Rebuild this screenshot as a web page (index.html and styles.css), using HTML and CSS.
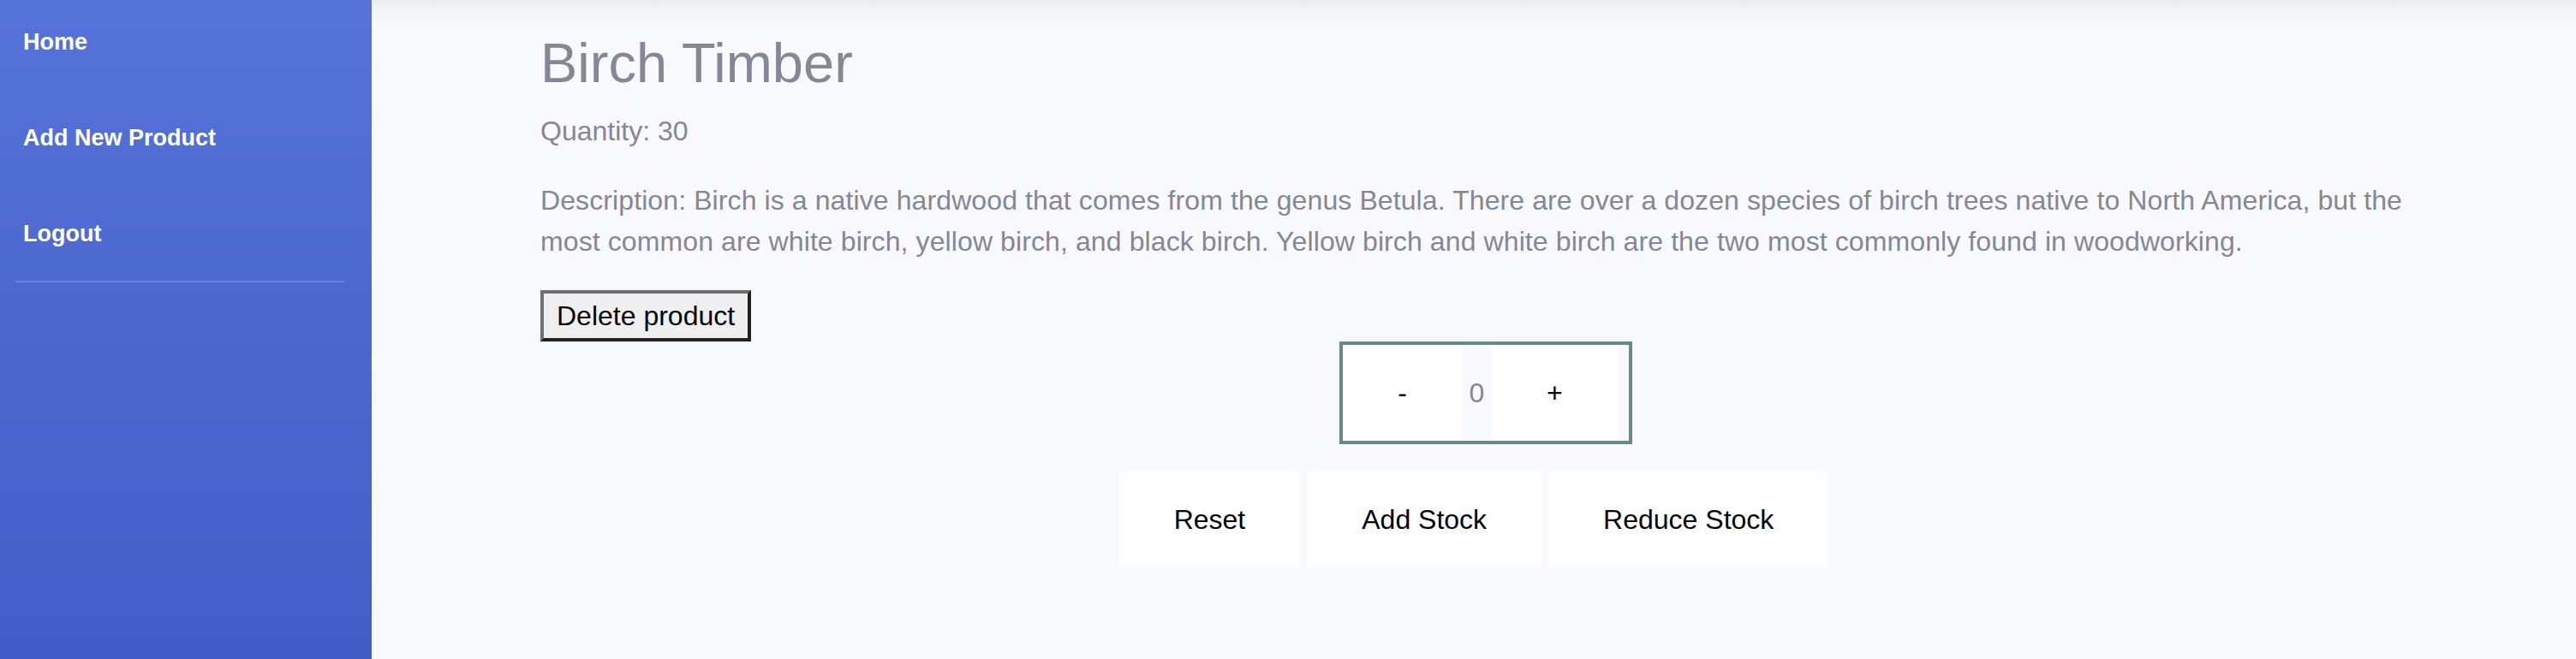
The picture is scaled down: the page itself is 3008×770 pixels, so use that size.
FILE: index.html
```html
<!DOCTYPE html>
<html lang="en">
<head>
<meta charset="utf-8">
<title>Birch Timber</title>
<link rel="stylesheet" href="styles.css">
</head>
<body>
<div class="wrapper">
  <nav class="sidebar">
    <ul class="nav">
      <li class="nav-item"><a class="nav-link" href="#">Home</a></li>
      <li class="nav-item"><a class="nav-link" href="#">Add New Product</a></li>
      <li class="nav-item"><a class="nav-link" href="#">Logout</a></li>
    </ul>
    <hr class="sidebar-divider">
  </nav>
  <main class="content">
    <div class="container">
      <h1 class="title">Birch Timber</h1>
      <p class="qty">Quantity: 30</p>
      <p class="desc">Description: Birch is a native hardwood that comes from the genus Betula. There are over a dozen species of birch trees native to North America, but the most common are white birch, yellow birch, and black birch. Yellow birch and white birch are the two most commonly found in woodworking.</p>
      <button class="delete-btn" type="button">Delete product</button>
      <div class="counter-row">
        <div class="counter">
          <button class="counter-btn" type="button">-</button>
          <input class="counter-input" type="text" value="0">
          <button class="counter-btn" type="button">+</button>
        </div>
      </div>
      <div class="actions">
        <button class="action-btn" type="button">Reset</button>
        <button class="action-btn" type="button">Add Stock</button>
        <button class="action-btn" type="button">Reduce Stock</button>
      </div>
    </div>
  </main>
</div>
</body>
</html>
```
FILE: styles.css
```css
* { box-sizing: border-box; }

html, body {
  margin: 0;
  padding: 0;
  height: 770px;
  overflow: hidden;
}

body {
  font-family: "Liberation Sans", Arial, sans-serif;
  color: #858796;
  background: #f8f9fc;
}

.wrapper {
  display: flex;
  height: 770px;
}

.sidebar {
  width: 434px;
  flex: 0 0 434px;
  background: linear-gradient(180deg, #5673d9 0px, #425dc5 770px);
}

.nav {
  list-style: none;
  margin: 0;
  padding: 0;
}

.nav-link {
  display: block;
  padding: 25px 0 39px 27px;
  font-size: 27px;
  line-height: 48px;
  font-weight: 700;
  color: #ffffff;
  text-decoration: none;
}

.nav-item:last-child .nav-link {
  padding-bottom: 31px;
}

.sidebar-divider {
  margin: 0 32px 0 18px;
  border: 0;
  border-top: 2px solid rgba(255, 255, 255, 0.18);
  height: 0;
}

.content {
  flex: 1;
  background: linear-gradient(180deg, #eaebef 0px, #f4f5f8 14px, #f8f9fc 30px);
}

.container {
  padding: 35px 197px 0 197px;
}

.title {
  margin: 0 0 16px 0;
  font-size: 65px;
  line-height: 1.2;
  font-weight: 400;
  color: #858796;
}

.qty {
  margin: 0 0 33px 0;
  font-size: 32px;
  line-height: 48px;
}

.desc {
  margin: 0 0 33px 0;
  font-size: 32px;
  line-height: 48px;
  letter-spacing: 0.1px;
}

.delete-btn {
  display: block;
  font-family: inherit;
  font-size: 32px;
  line-height: 48px;
  color: #000000;
  background: #efefef;
  padding: 2px 15px;
  border-width: 4px;
  border-style: solid;
  border-color: #707070 #202020 #202020 #707070;
  margin: 0;
}

.counter-row {
  display: flex;
  justify-content: center;
}

.counter {
  display: flex;
  margin-left: 28px;
  border: 4px solid #688a80;
  background: #f8f9fc;
  padding-right: 13px;
}

.counter-btn,
.action-btn {
  font-family: inherit;
  font-size: 32px;
  line-height: 48px;
  color: #000000;
  background: #ffffff;
  border: 0;
  padding: 32px 64px;
  margin: 0;
}

.counter-input {
  width: 35px;
  border: 0;
  padding: 0;
  margin: 0;
  background: transparent;
  font-family: inherit;
  font-size: 32px;
  line-height: 48px;
  color: #858796;
  text-align: center;
}

.actions {
  display: flex;
  justify-content: center;
  gap: 8px;
  margin-top: 32px;
}
```
